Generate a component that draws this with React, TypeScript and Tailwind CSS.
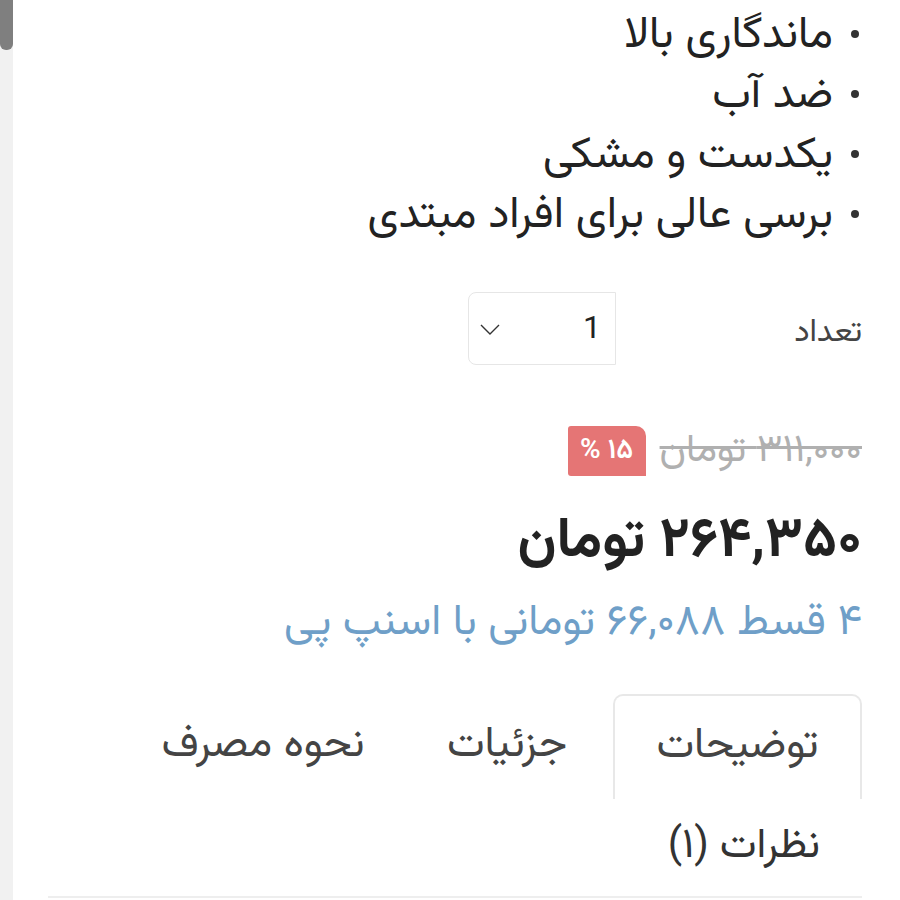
import React from "react";

const items = ["ماندگاری بالا", "ضد آب", "یکدست و مشکی", "برسی عالی برای افراد مبتدی"];

export default function App() {
  return (
    <div className="flex h-[900px] w-[900px] overflow-hidden bg-white font-['Vazirmatn',sans-serif]">
      <div className="flex w-[13px] shrink-0 flex-col bg-[#f1f1f1]">
        <div className="h-[50px] w-[13px] rounded-b-[6px] bg-[#7f7f7f]" />
      </div>
      <div dir="rtl" className="flex flex-1 flex-col pr-[38px] pl-[35px] text-[#222]">
        <ul className="mt-[7px] flex flex-col">
          {items.map((t) => (
            <li key={t} className="flex h-[60px] items-center gap-[18px] pr-[3px] text-[44px] leading-[60px]">
              <span className="mb-[6px] h-[8px] w-[8px] shrink-0 rounded-full bg-[#333]" />
              <span>{t}</span>
            </li>
          ))}
        </ul>
        <div className="mt-[45px] flex h-[73px] items-center">
          <span className="mt-[8px] w-[67px] text-[32px] leading-none text-[#444]">تعداد</span>
          <div className="mr-[179px] flex h-[73px] w-[148px] items-center justify-between rounded-l-[8px] border border-[#e6e6e6] pr-[14px] pl-[10px]">
            <span className="mb-[4px] font-['Roboto',sans-serif] text-[32px] leading-none text-[#222]">1</span>
            <svg width="22" height="14" viewBox="0 0 22 14" fill="none" stroke="#333" strokeWidth="1.4">
              <path d="M2 3l9 9 9-9" />
            </svg>
          </div>
        </div>
        <div className="mt-[61px] flex h-[50px] items-center gap-[14px]">
          <span className="text-[39px] leading-none text-[#b0b0b0] line-through">۳۱۱,۰۰۰ تومان</span>
          <span className="flex h-[50px] w-[78px] items-center justify-center rounded-tl-[3px] rounded-tr-[10px] rounded-bl-[3px] bg-[#e57575] text-[28px] font-semibold text-white">
            ۱۵ %
          </span>
        </div>
        <div className="mt-[37px] flex h-[60px] items-center text-[56px] font-bold leading-none text-[#222]">۲۶۴,۳۵۰ تومان</div>
        <div className="mt-[25px] flex h-[50px] items-center text-[43px] leading-none text-[#6f9fc8]">۴ قسط ۶۶,۰۸۸ تومانی با اسنپ پی</div>
        <div className="mt-[46px] flex items-end">
          <div className="flex h-[105px] w-[249px] items-center justify-center rounded-t-[10px] border-x-2 border-t-2 border-[#e8e8e8] text-[43px] text-[#444]">
            توضیحات
          </div>
          <div className="flex h-[105px] w-[212px] items-center justify-center text-[43px] text-[#444]">جزئیات</div>
          <div className="flex h-[105px] w-[276px] items-center justify-center text-[43px] text-[#444]">نحوه مصرف</div>
        </div>
        <div className="flex h-[99px] items-center border-b-2 border-[#eeeeee] pr-[42px] text-[42px] text-[#333]">
          نظرات (۱)
        </div>
      </div>
    </div>
  );
}
